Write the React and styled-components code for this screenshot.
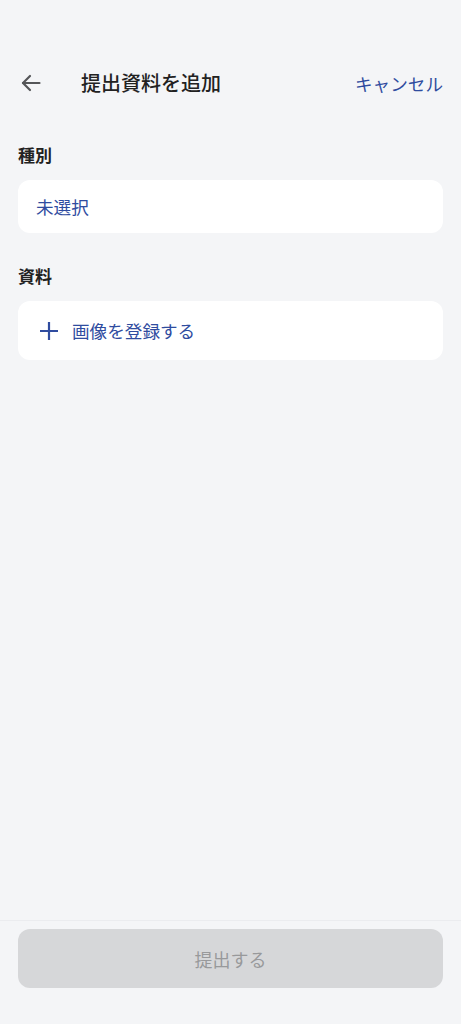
import React from 'react'
import styled, { createGlobalStyle } from 'styled-components'

const GlobalStyle = createGlobalStyle`
  html, body {
    margin: 0;
    padding: 0;
    background: #f4f5f7;
  }
  body {
    font-family: "Noto Sans CJK JP", "Noto Sans", sans-serif;
  }
`

const Page = styled.div`
  display: flex;
  flex-direction: column;
  height: 1024px;
  background: #f4f5f7;
`

const Header = styled.header`
  display: flex;
  align-items: center;
  height: 36px;
  margin-top: 65px;
  padding: 0 18px 0 20px;
`

const BackButton = styled.button`
  display: flex;
  align-items: center;
  justify-content: center;
  width: 22px;
  height: 22px;
  padding: 0;
  border: none;
  background: none;
  color: #555658;
`

const Title = styled.h1`
  flex: 1;
  margin: 0 0 0 39px;
  font-size: 20px;
  font-weight: 500;
  color: #222;
  line-height: 1;
`

const TextButton = styled.button`
  padding: 0;
  border: none;
  background: none;
  font-family: inherit;
  font-size: 17.6px;
  color: #2f4c9f;
`

const Content = styled.main`
  flex: 1;
  display: flex;
  flex-direction: column;
  padding: 0 18px;
`

const Label = styled.div`
  margin-top: ${p => p.$top}px;
  font-size: 17px;
  font-weight: 700;
  color: #222;
  line-height: 1;
`

const Card = styled.button`
  display: flex;
  align-items: center;
  gap: 14px;
  height: ${p => p.$height}px;
  margin-top: 17px;
  padding: 0 18px;
  padding-left: ${p => p.$indent}px;
  border: none;
  border-radius: 12px;
  background: #fff;
  font-family: inherit;
  font-size: 17.6px;
  color: #2f4c9f;
  text-align: left;
`

const Footer = styled.footer`
  border-top: 1px solid #ebecef;
  padding: 8px 18px 36px;
`

const SubmitButton = styled.button`
  width: 100%;
  height: 59px;
  border: none;
  border-radius: 12px;
  background: #d6d7d9;
  font-family: inherit;
  font-size: 18px;
  color: #98999b;
`

const ArrowIcon = () => (
  <svg width="20" height="20" viewBox="0 0 20 20" fill="none" stroke="currentColor" strokeWidth="2.2" strokeLinecap="round" strokeLinejoin="round">
    <path d="M18.5 10H2" />
    <path d="M9 3L2 10l7 7" />
  </svg>
)

const PlusIcon = () => (
  <svg width="18" height="18" viewBox="0 0 18 18" fill="none" stroke="currentColor" strokeWidth="2.2">
    <path d="M9 0v18M0 9h18" />
  </svg>
)

export default function App() {
  return (
    <Page>
      <GlobalStyle />
      <Header>
        <BackButton aria-label="戻る"><ArrowIcon /></BackButton>
        <Title>提出資料を追加</Title>
        <TextButton>キャンセル</TextButton>
      </Header>
      <Content>
        <Label $top={45}>種別</Label>
        <Card $height={53} $indent={18}>未選択</Card>
        <Label $top={34}>資料</Label>
        <Card $height={59} $indent={22}>
          <PlusIcon />
          画像を登録する
        </Card>
      </Content>
      <Footer>
        <SubmitButton disabled>提出する</SubmitButton>
      </Footer>
    </Page>
  )
}
